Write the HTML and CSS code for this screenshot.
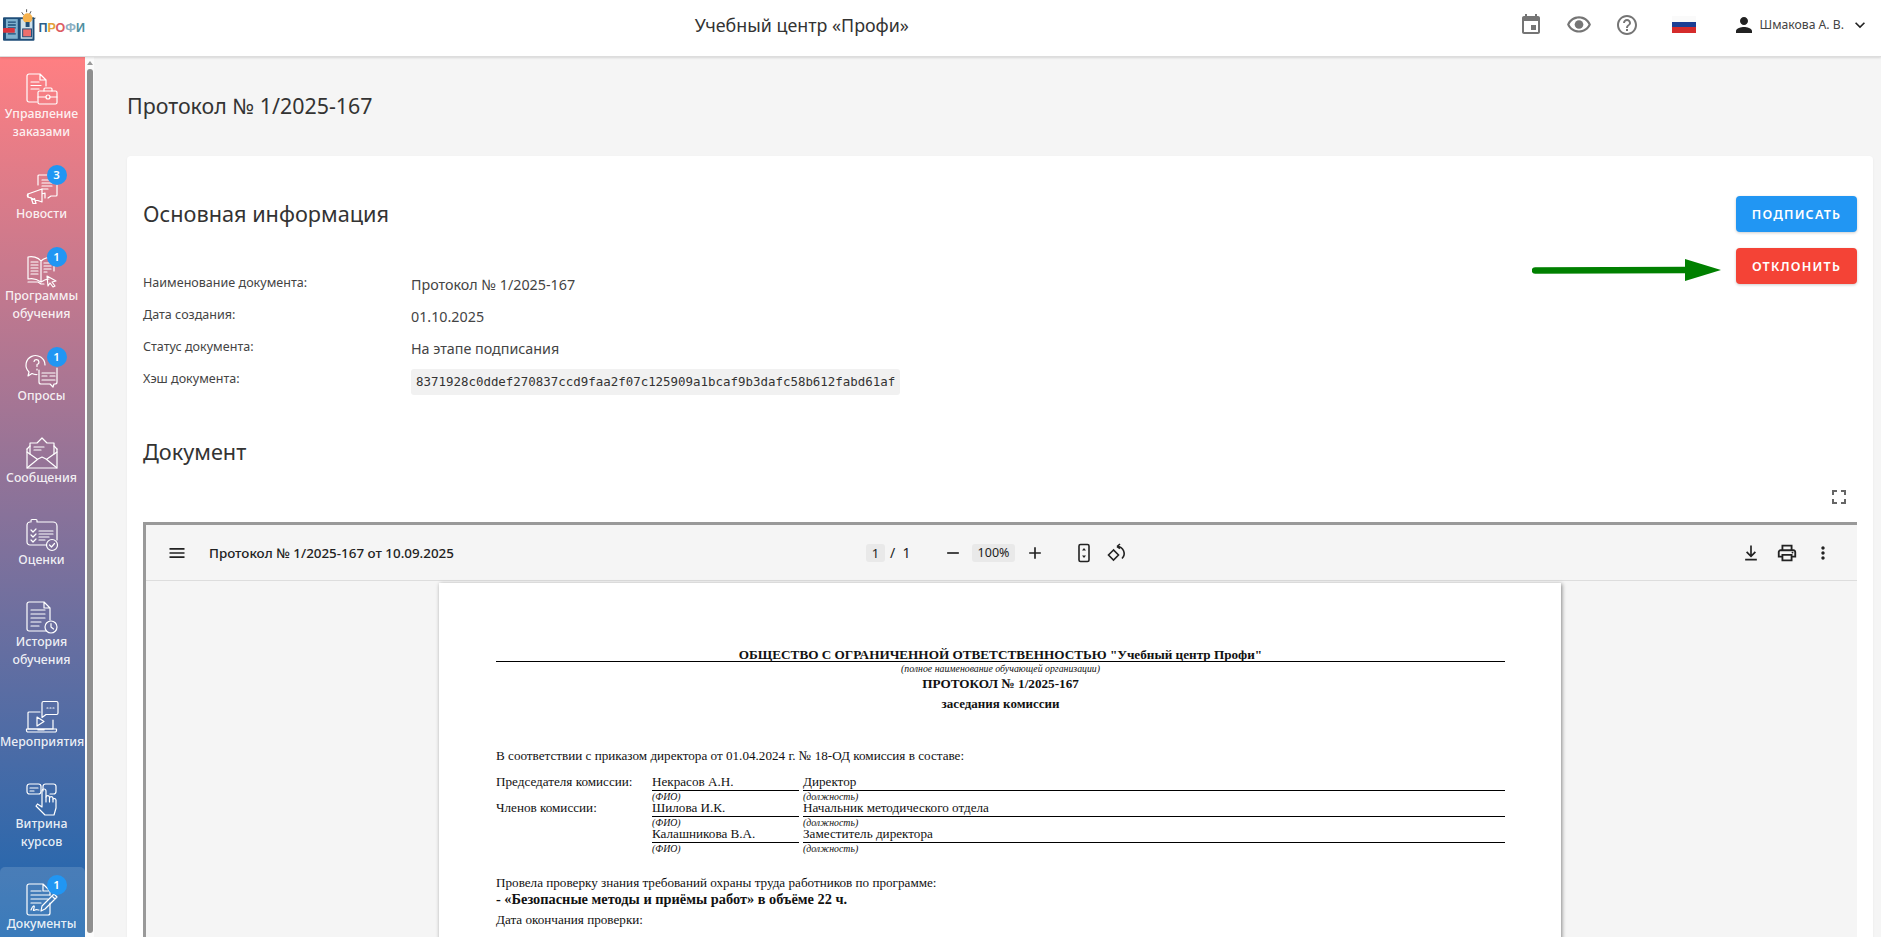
FILE: index.html
```html
<!DOCTYPE html>
<html lang="ru">
<head>
    <meta charset="UTF-8">
    <meta name="viewport" content="width=device-width, initial-scale=1.0">
    <title>Протокол № 1/2025-167</title>
    <link rel="stylesheet" href="styles.css">
</head>
<body>
    <header class="topbar">
        <div class="logo">
            <svg width="34" height="34" viewBox="0 0 34 34">
                <path d="M27 6l1.500-3M21 7l-2-3M33 10l-3 1M24 4V1" stroke="#555" stroke-width="1" fill="none"/>
                <rect x="0" y="9" width="32" height="24" rx="1" fill="#1f4e79"/>
                <rect x="3" y="11" width="12" height="20" fill="#7fb2cf"/>
                <rect x="18" y="11" width="12" height="20" fill="#cfe0ea"/>
                <path d="M5 14h8M5 17h8M5 20h8M5 26h8" stroke="#1f4e79" stroke-width="1.300"/>
                <rect x="0" y="20" width="12" height="5" rx="1" fill="#d9363e"/>
                <rect x="20" y="21" width="9" height="8" fill="#ef6f6c" stroke="#1f4e79"/>
                <circle cx="25" cy="10" r="5" fill="#f6b24e"/>
                <rect x="23" y="14" width="4" height="5" fill="#1f4e79"/>
            </svg>
            <span class="logo-text"><span class="l1">П</span><span class="l2">Р</span><span class="l3">О</span><span class="l4">Ф</span><span class="l5">И</span></span>
        </div>
        <div class="topbar-title">Учебный центр «Профи»</div>
        <div class="topbar-right">
            <svg class="ic-event" width="24" height="24" viewBox="0 0 24 24"><path d="M17 12h-5v5h5v-5zM16 1v2H8V1H6v2H5c-1.110 0-1.990.9-1.990 2L3 19c0 1.100.89 2 2 2h14c1.100 0 2-.9 2-2V5c0-1.100-.9-2-2-2h-1V1h-2zm3 18H5V8h14v11z"/></svg>
            <svg class="ic-eye" width="26" height="26" viewBox="0 0 24 24"><path d="M12 6c3.790 0 7.170 2.130 8.820 5.500C19.170 14.870 15.790 17 12 17s-7.170-2.130-8.820-5.500C4.830 8.130 8.210 6 12 6m0-2C7 4 2.730 7.110 1 11.500 2.730 15.890 7 19 12 19s9.270-3.110 11-7.500C21.270 7.110 17 4 12 4z"/><circle cx="12" cy="11.500" r="4"/></svg>
            <svg class="ic-help" width="24" height="24" viewBox="0 0 24 24"><path d="M11 18h2v-2h-2v2zm1-16C6.480 2 2 6.480 2 12s4.480 10 10 10 10-4.480 10-10S17.520 2 12 2zm0 18c-4.410 0-8-3.590-8-8s3.590-8 8-8 8 3.590 8 8-3.590 8-8 8zm0-14c-2.210 0-4 1.790-4 4h2c0-1.100.9-2 2-2s2 .9 2 2c0 2-3 1.750-3 5h2c0-2.250 3-2.500 3-5 0-2.210-1.790-4-4-4z"/></svg>
            <div class="flag"><i class="flag-w"></i><i class="flag-b"></i><i class="flag-r"></i></div>
            <svg class="ic-person" width="24" height="24" viewBox="0 0 24 24"><path d="M12 12c2.210 0 4-1.790 4-4s-1.790-4-4-4-4 1.790-4 4 1.790 4 4 4zm0 2c-2.670 0-8 1.340-8 4v2h16v-2c0-2.660-5.330-4-8-4z"/></svg>
            <span class="user-name">Шмакова А. В.</span>
            <svg class="ic-chevron" width="20" height="20" viewBox="0 0 24 24"><path d="M16.590 8.590L12 13.170 7.410 8.590 6 10l6 6 6-6z"/></svg>
        </div>
    </header>

    <div class="layout">
        <nav class="sidebar">
            <a class="nav-item">
                <span class="nav-icon">
                    <svg width="32" height="32" viewBox="0 0 32 32"><path d="M11 29H3a2 2 0 0 1-2-2V3a2 2 0 0 1 2-2h11l6 6v6M14 1v6h6M5 9h8M5 12.500h10M5 16h8"/><rect x="12" y="18" width="19" height="13" rx="1.500"/><path d="M18 18v-2a1 1 0 0 1 1-1h6a1 1 0 0 1 1 1v2M12 24h8M24 24h7"/><circle cx="22" cy="24" r="2"/></svg>
                </span>
                Управление заказами
            </a>
            <a class="nav-item">
                <span class="nav-icon">
                    <svg width="32" height="32" viewBox="0 0 32 32"><path d="M12 12V3a1 1 0 0 1 1-1h14M31 8v14a1 1 0 0 1-1 1h-5l-3 2M16 7h8M16 10h10M16 13h10M16 16h6"/><path d="M2 21l14-5v13l-14-5zM16 21l3-1v5M5 24.500l2 6h3l-1.500-5"/><path d="M2 21a2 2 0 0 0 0 3"/></svg>
                    <b class="badge">3</b>
                </span>
                Новости
            </a>
            <a class="nav-item">
                <span class="nav-icon">
                    <svg width="32" height="32" viewBox="0 0 32 32"><path d="M15 6C12 2 6 1 2 2v22c4-1 9 0 13 3 3-2 5-3 8-3M15 6c3-3 8-4 13-4v14M15 6v21"/><path d="M5 7h7M5 10h7M5 13h7M5 16h7M5 19h7M18 8h7M18 11h7M18 14h7M18 17h3M2 27h10l3 2h3"/><path d="M21 21l9 5-4 1 3 4-2 1-3-4-2 3z"/></svg>
                    <b class="badge">1</b>
                </span>
                Программы обучения
            </a>
            <a class="nav-item">
                <span class="nav-icon">
                    <svg width="32" height="32" viewBox="0 0 32 32"><path d="M19 10a9.500 9.500 0 1 0-16 7l-1 4 4-2.500a9 9 0 0 0 5 1"/><path d="M8 6.500a2.500 2.500 0 1 1 3 3v2M11 14v1"/><path d="M13 15v12a2 2 0 0 0 2 2h9l3 3 1-3h1a2 2 0 0 0 2-2V13"/><path d="M16 18h13M16 21h5M24 21h5M16 25h13"/></svg>
                    <b class="badge">1</b>
                </span>
                Опросы
            </a>
            <a class="nav-item">
                <span class="nav-icon">
                    <svg width="32" height="32" viewBox="0 0 32 32"><path d="M1 12v18a1 1 0 0 0 1 1h28a1 1 0 0 0 1-1V12"/><path d="M1 31l11-9 4-2 4 2 11 9M1 15l10 7M31 15l-10 7"/><path d="M4 17V6h7l5-5 5 5h7v11"/><path d="M8 10h10M8 13h7"/><path d="M1 12l3-3M31 12l-3-3"/></svg>
                </span>
                Сообщения
            </a>
            <a class="nav-item">
                <span class="nav-icon">
                    <svg width="32" height="32" viewBox="0 0 32 32"><path d="M5 3V1.500a1 1 0 0 1 1-1h4a1 1 0 0 1 1 1V3h16a4 4 0 0 1 4 4v14"/><path d="M20 26H4a3 3 0 0 1-3-3V6a3 3 0 0 1 3-3"/><path d="M5 11l2 2 3-3M5 16l2 2 3-3M5 21l2 2 3-3M13 12h14M13 15h14M13 18h10M13 21h6"/><circle cx="26" cy="26" r="5.500"/><path d="M23.500 26l2 2 3-3.500"/></svg>
                </span>
                Оценки
            </a>
            <a class="nav-item">
                <span class="nav-icon">
                    <svg width="32" height="32" viewBox="0 0 32 32"><path d="M20 30H3a2 2 0 0 1-2-2V3a2 2 0 0 1 2-2h15l6 6v12M18 1v6h6"/><path d="M5 9h14M5 13h14M5 17h14M5 21h10M5 25h8"/><circle cx="25" cy="26" r="6"/><path d="M25 22.500V26l2.500 2"/></svg>
                </span>
                История обучения
            </a>
            <a class="nav-item">
                <span class="nav-icon">
                    <svg width="32" height="32" viewBox="0 0 32 32"><path d="M14 11H3a1 1 0 0 0-1 1v16h25v-9"/><path d="M0.500 28h30v1.500a1.500 1.500 0 0 1-1.500 1.500H2a1.500 1.500 0 0 1-1.500-1.500zM12 28v1h6v-1"/><path d="M11 16l7 4.500-7 4.500z"/><path d="M16 2a1.500 1.500 0 0 1 1.500-1.500h13A1.500 1.500 0 0 1 32 2v10a1.500 1.500 0 0 1-1.500 1.500H20l-4 3z"/><path d="M21 7h1M24 7h1M27 7h1"/></svg>
                </span>
                Мероприятия
            </a>
            <a class="nav-item">
                <span class="nav-icon">
                    <svg width="32" height="32" viewBox="0 0 32 32"><rect x="1" y="1" width="14" height="10" rx="2.500"/><path d="M4 5h8M4 8h4"/><path d="M17 8V3.500A2.500 2.500 0 0 1 19.500 1h8A2.500 2.500 0 0 1 30 3.500v5a2.500 2.500 0 0 1-2.500 2.500H24"/><path d="M19 32l-9-9 1.500-2 4.500 3V8a2 2 0 0 1 4 0v6a1.800 1.800 0 0 1 3.500 0v1a1.800 1.800 0 0 1 3.500 0v1a1.800 1.800 0 0 1 3 1v8l-2 7z"/><path d="M20 14v5M23.500 15v4M27 16v3"/></svg>
                </span>
                Витрина курсов
            </a>
            <a class="nav-item active">
                <span class="nav-icon">
                    <svg width="32" height="32" viewBox="0 0 32 32"><path d="M24 20v10a2 2 0 0 1-2 2H3a2 2 0 0 1-2-2V3a2 2 0 0 1 2-2h14l7 7v4M17 1v7h7"/><path d="M5 8h10M5 12h19M5 16h17M5 20h10"/><path d="M15 28l1-5L28 11l3 3-12 12zM26 13l3 3"/><path d="M5 27c2-5 4-5 3-2s-1 3 1 2 2 0 4 0"/></svg>
                    <b class="badge">1</b>
                </span>
                Документы
            </a>
        </nav>
        <div class="side-scroll">
            <span class="side-scroll-up"></span>
            <span class="side-scroll-thumb"></span>
        </div>

        <main class="content">
            <h1 class="page-title">Протокол № 1/2025-167</h1>

            <section class="card">
                <div class="info-head">
                    <div class="info-left">
                        <h2 class="section-title">Основная информация</h2>
                        <div class="info-grid">
                            <div class="info-label">Наименование документа:</div>
                            <div class="info-value">Протокол № 1/2025-167</div>
                            <div class="info-label">Дата создания:</div>
                            <div class="info-value">01.10.2025</div>
                            <div class="info-label">Статус документа:</div>
                            <div class="info-value">На этапе подписания</div>
                            <div class="info-label">Хэш документа:</div>
                            <div class="info-value"><code class="hash">8371928c0ddef270837ccd9faa2f07c125909a1bcaf9b3dafc58b612fabd61af</code></div>
                        </div>
                    </div>
                    <div class="actions">
                        <button class="btn btn-sign">Подписать</button>
                        <button class="btn btn-reject">Отклонить</button>
                        <!-- annotation on top of the screen -->
                        <svg class="arrow" width="190" height="24" viewBox="0 0 190 24"><path d="M3 12.500L155 12" stroke="#008000" stroke-width="6.500" stroke-linecap="round"/><path d="M153 1l36 11-36 11z" fill="#008000"/></svg>
                    </div>
                </div>

                <h2 class="section-title doc-title">Документ</h2>
                <div class="fullscreen-row">
                    <svg width="24" height="24" viewBox="0 0 24 24"><path d="M7 14H5v5h5v-2H7v-3zm-2-4h2V7h3V5H5v5zm12 7h-3v2h5v-5h-2v3zM14 5v2h3v3h2V5h-5z"/></svg>
                </div>

                <div class="viewer">
                    <div class="viewer-bar">
                        <div class="bar-left">
                            <svg width="20" height="20" viewBox="0 0 24 24"><path d="M3 18h18v-2H3v2zm0-5h18v-2H3v2zm0-7v2h18V6H3z"/></svg>
                            <span class="viewer-name">Протокол № 1/2025-167 от 10.09.2025</span>
                        </div>
                        <div class="bar-center">
                            <span class="chip chip-page">1</span>
                            <span class="pages">/&nbsp;&nbsp;1</span>
                            <svg class="ic-minus" width="20" height="20" viewBox="0 0 24 24"><path d="M19 13H5v-2h14v2z"/></svg>
                            <span class="chip chip-zoom">100%</span>
                            <svg width="20" height="20" viewBox="0 0 24 24"><path d="M19 13h-6v6h-2v-6H5v-2h6V5h2v6h6v2z"/></svg>
                            <svg class="ic-fit" width="20" height="20" viewBox="0 0 20 20"><rect x="5" y="1.500" width="10" height="17" rx="1.500" fill="none" stroke="#222" stroke-width="1.600"/><path d="M10 5l2 2.500H8zM10 15l-2-2.500h4z"/></svg>
                            <svg class="ic-rotate" width="20" height="20" viewBox="0 0 20 20"><path d="M6.500 7l-5 5 5 5 5-5z" fill="none" stroke="#222" stroke-width="1.600"/><path d="M10 3.500a7 7 0 0 1 5 12M10 3.500l3-2.500M10 3.500l3 2" fill="none" stroke="#222" stroke-width="1.600"/></svg>
                        </div>
                        <div class="bar-right">
                            <svg width="20" height="20" viewBox="0 0 24 24"><path d="M11 3h2v10.500l3.500-3.500 1.500 1.500-6 6-6-6L7.500 10l3.500 3.500zM5 19h14v2H5z"/></svg>
                            <svg width="22" height="22" viewBox="0 0 24 24"><path d="M19 8h-1V3H6v5H5c-1.660 0-3 1.340-3 3v6h4v4h12v-4h4v-6c0-1.660-1.340-3-3-3zM8 5h8v3H8V5zm8 12v2H8v-4h8v2zm2-2v-2H6v2H4v-4c0-.55.45-1 1-1h14c.55 0 1 .45 1 1v4h-2z"/><circle cx="18" cy="11.500" r="1"/></svg>
                            <svg width="20" height="20" viewBox="0 0 24 24"><path d="M12 8c1.100 0 2-.9 2-2s-.9-2-2-2-2 .9-2 2 .9 2 2 2zm0 2c-1.100 0-2 .9-2 2s.9 2 2 2 2-.9 2-2-.9-2-2-2zm0 6c-1.100 0-2 .9-2 2s.9 2 2 2 2-.9 2-2-.9-2-2-2z"/></svg>
                        </div>
                    </div>
                    <div class="viewer-body">
                        <div class="pdf-page">
                            <div class="doc-org">ОБЩЕСТВО С ОГРАНИЧЕННОЙ ОТВЕТСТВЕННОСТЬЮ "Учебный центр Профи"</div>
                            <div class="doc-hint">(полное наименование обучающей организации)</div>
                            <div class="doc-head">ПРОТОКОЛ № 1/2025-167</div>
                            <div class="doc-sub">заседания комиссии</div>
                            <p class="doc-line doc-intro">В соответствии с приказом директора от 01.04.2024 г. № 18-ОД комиссия в составе:</p>
                            <div class="commission">
                                <div class="c-role">Председателя комиссии:</div>
                                <div class="c-fill">Некрасов А.Н.</div>
                                <div class="c-fill">Директор</div>
                                <div></div>
                                <div class="c-hint">(ФИО)</div>
                                <div class="c-hint">(должность)</div>

                                <div class="c-role">Членов комиссии:</div>
                                <div class="c-fill">Шилова И.К.</div>
                                <div class="c-fill">Начальник методического отдела</div>
                                <div></div>
                                <div class="c-hint">(ФИО)</div>
                                <div class="c-hint">(должность)</div>

                                <div></div>
                                <div class="c-fill">Калашникова В.А.</div>
                                <div class="c-fill">Заместитель директора</div>
                                <div></div>
                                <div class="c-hint">(ФИО)</div>
                                <div class="c-hint">(должность)</div>
                            </div>
                            <p class="doc-line doc-check">Провела проверку знания требований охраны труда работников по программе:</p>
                            <p class="doc-line doc-course">- «Безопасные методы и приёмы работ» в объёме 22 ч.</p>
                            <p class="doc-line doc-date">Дата окончания проверки:</p>
                        </div>
                    </div>
                </div>
            </section>
        </main>
    </div>
</body>
</html>
```

FILE: styles.css
```css
* {
    margin: 0;
    padding: 0;
    box-sizing: border-box;
}

html, body {
    height: 100%;
    overflow: hidden;
}

body {
    font-family: "Noto Sans", sans-serif;
    background-color: #f5f5f5;
    color: #333;
    display: flex;
    flex-direction: column;
}

/* top bar */
.topbar {
    height: 57px;
    flex: none;
    display: flex;
    align-items: center;
    justify-content: space-between;
    padding: 0 11px 6px 3px;
    background: white;
    border-bottom: 1px solid #ddd;
    box-shadow: 0 1px 2px rgba(0,0,0,0.12);
    position: relative;
    z-index: 2;
}

.logo {
    display: flex;
    align-items: flex-end;
    width: 82px;
}

.logo-text {
    font-family: "Liberation Sans", sans-serif;
    font-size: 12.500px;
    font-weight: bold;
    line-height: 12px;
    margin: 0 0 8px 2px;
}

.l1 { color: #2b5f8a; }
.l2 { color: #e3a13a; }
.l3 { color: #dd5c62; }
.l4 { color: #8fb0c4; }
.l5 { color: #4f8f9f; }

.topbar-title {
    font-size: 17.850px;
    color: #333;
}

.topbar-right {
    display: flex;
    align-items: center;
    padding-bottom: 1px;
}

.topbar-right svg {
    fill: #757575;
    display: block;
}

.ic-eye { margin-left: 23px; }
.ic-help { margin-left: 23px; }

.flag {
    width: 24px;
    height: 17px;
    margin: 0 0 0 33px;
    display: flex;
    flex-direction: column;
}

.flag i {
    flex: 1;
    display: block;
}

.flag-w { background: #fafafa; }
.flag-b { background: #1c3f94; }
.flag-r { background: #d52b2b; }

.topbar-right .ic-person {
    fill: #222;
    margin-left: 36px;
}

.user-name {
    font-size: 12.200px;
    color: #444;
    margin: 0 0 1px 4px;
}

.topbar-right .ic-chevron {
    fill: #222;
    margin-left: 6px;
}

/* left navigation */
.layout {
    flex: 1;
    display: flex;
    min-height: 0;
}

.sidebar {
    width: 85px;
    flex: none;
    background: linear-gradient(#ff7f82, #1a66b0);
    overflow: hidden;
}

.nav-item {
    display: block;
    padding: 16px 2px 16px 0;
    color: rgba(255,255,255,0.9);
    font-size: 12.300px;
    font-weight: 500;
    line-height: 18px;
    text-align: center;
}

.nav-item.active {
    background: rgba(255,255,255,0.14);
    border-radius: 5px 5px 0 0;
}

.nav-icon {
    display: block;
    width: 32px;
    height: 32px;
    margin: 0 auto;
    position: relative;
}

.nav-icon svg {
    display: block;
    fill: none;
    stroke: white;
    stroke-width: 1.200;
    stroke-linejoin: round;
    stroke-linecap: round;
    overflow: visible;
}

.badge {
    position: absolute;
    top: -8px;
    left: 21px;
    width: 20px;
    height: 20px;
    border-radius: 50%;
    background: #2196f3;
    color: white;
    font-size: 11.500px;
    font-weight: 600;
    line-height: 20px;
    text-align: center;
}

.side-scroll {
    width: 9px;
    flex: none;
    background: #fbfbfb;
    padding: 4px 2px 4px 2px;
    display: flex;
    flex-direction: column;
    align-items: center;
}

.side-scroll-up {
    width: 0;
    height: 0;
    border-left: 3px solid transparent;
    border-right: 3px solid transparent;
    border-bottom: 4px solid #999;
    margin-bottom: 4px;
}

.side-scroll-thumb {
    flex: 1;
    width: 6px;
    background: #8f8f8f;
    border-radius: 3px;
}

/* main area */
.content {
    flex: 1;
    min-width: 0;
    padding: 0 8px 0 33px;
}

.page-title {
    font-size: 21.400px;
    font-weight: 400;
    line-height: 30px;
    color: #333;
    padding: 34px 0 35px;
}

.card {
    background: white;
    border-radius: 4px;
    padding: 40px 16px 0;
    box-shadow: 0 1px 3px rgba(0,0,0,0.05);
}

.info-head {
    display: flex;
    justify-content: space-between;
}

.section-title {
    font-size: 21.700px;
    font-weight: 400;
    line-height: 36px;
    color: #333;
}

.info-grid {
    display: grid;
    grid-template-columns: 268px 1fr;
    grid-auto-rows: 32px;
    margin-top: 43px;
}

.info-label {
    font-size: 12.550px;
    line-height: 18px;
    color: #444;
    margin-top: -1px;
}

.info-value {
    font-size: 14.300px;
    line-height: 20px;
    color: #444;
}

.hash {
    display: inline-block;
    font-family: "DejaVu Sans Mono", monospace;
    font-size: 12.450px;
    line-height: 26px;
    height: 26px;
    padding: 0 5px;
    background: #f1f1f1;
    border-radius: 3px;
    margin-top: -6px;
    color: #333;
}

.actions {
    width: 121px;
    position: relative;
}

.btn {
    display: block;
    width: 121px;
    height: 36px;
    border: none;
    border-radius: 4px;
    color: white;
    font-family: inherit;
    font-size: 12.600px;
    font-weight: 600;
    letter-spacing: 1.200px;
    text-transform: uppercase;
    box-shadow: 0 1px 3px rgba(0,0,0,0.2);
}

.btn-sign {
    background: #2196f3;
    margin-bottom: 16px;
}

.btn-reject {
    background: #f44336;
}

.arrow {
    position: absolute;
    top: 62px;
    right: 135px;
}

.doc-title {
    margin-top: 31px;
}

.fullscreen-row {
    display: flex;
    justify-content: flex-end;
    padding: 15px 6px 0 0;
    height: 52px;
}

.fullscreen-row svg {
    fill: #666;
    display: block;
}

/* pdf viewer */
.viewer {
    border-top: 3px solid #999;
    border-left: 3px solid #999;
    height: 420px;
    overflow: hidden;
}

.viewer-bar {
    height: 56px;
    display: grid;
    grid-template-columns: 1fr auto 1fr;
    align-items: center;
    background: #f5f5f5;
    border-bottom: 1px solid #ddd;
    padding: 0 24px 0 21px;
    color: #222;
}

.viewer-bar svg {
    display: block;
    fill: #222;
}

.bar-left {
    display: flex;
    align-items: center;
    gap: 22px;
}

.viewer-name {
    font-size: 13.400px;
    font-weight: 500;
}

.bar-center {
    display: flex;
    align-items: center;
    font-size: 14px;
    margin-right: 7px;
}

.chip {
    display: block;
    height: 18px;
    line-height: 18px;
    background: #e9e9e9;
    border-radius: 3px;
    text-align: center;
    font-size: 13px;
}

.chip-page { width: 19px; }

.pages {
    margin-left: 5px;
    width: 53px;
}

.chip-zoom {
    width: 43px;
    margin: 0 10px 0 9px;
    font-size: 12.500px;
}

.ic-fit { margin-left: 29px; }
.ic-rotate { margin-left: 13px; }

.bar-right {
    display: flex;
    align-items: center;
    justify-content: flex-end;
    gap: 15px;
}

.viewer-body {
    background: #f5f5f5;
    padding: 2px 0 0 293px;
}

.pdf-page {
    width: 1122px;
    height: 400px;
    background: white;
    padding: 63px 56px 0 57px;
    box-shadow: 1px 1px 4px rgba(0,0,0,0.45);
    color: #111;
    font-family: "Liberation Serif", serif;
    font-size: 13.150px;
}

.doc-org {
    font-size: 13.200px;
    font-weight: bold;
    line-height: 18px;
    height: 16px;
    text-align: center;
    border-bottom: 1px solid #000;
}

.doc-hint {
    font-size: 9.800px;
    font-style: italic;
    line-height: 12px;
    margin-top: 1px;
    text-align: center;
}

.doc-head {
    font-size: 13.200px;
    font-weight: bold;
    line-height: 18px;
    text-align: center;
}

.doc-sub {
    font-size: 13px;
    font-weight: bold;
    line-height: 18px;
    margin-top: 2px;
    text-align: center;
}

.doc-line {
    line-height: 16px;
}

.doc-intro { margin-top: 35px; }

.commission {
    display: grid;
    grid-template-columns: 156px 151px 1fr;
    margin-top: 11px;
}

.c-role {
    line-height: 14px;
}

.c-fill {
    line-height: 14px;
    height: 16px;
    border-bottom: 1px solid #000;
}

.commission .c-fill:nth-child(6n+2) {
    margin-right: 4px;
}

.c-hint {
    font-size: 9.800px;
    font-style: italic;
    line-height: 12px;
    height: 10px;
}

.doc-check { margin-top: 22px; }

.doc-course {
    font-size: 14.360px;
    font-weight: bold;
}

.doc-date { margin-top: 5px; }
```
